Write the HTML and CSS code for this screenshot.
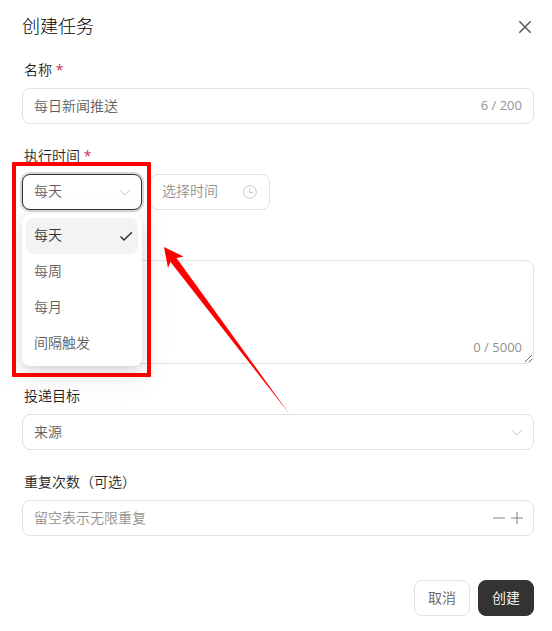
FILE: index.html
```
<!DOCTYPE html>
<html lang="zh-CN">
<head>
    <meta charset="UTF-8">
    <meta name="viewport" content="width=device-width, initial-scale=1">
    <title>创建任务</title>
    <link rel="stylesheet" href="styles.css">
</head>
<body>
    <form class="modal">
        <header class="modal-header">
            <h1 class="modal-title">创建任务</h1>
            <button type="button" class="close-button" aria-label="关闭">
                <svg width="18" height="18" viewBox="0 0 18 18"><path d="M3.3 3.3 14.7 14.7M14.7 3.3 3.3 14.7"/></svg>
            </button>
        </header>

        <div class="form-item">
            <label class="form-label" for="name">名称 <span class="required">*</span></label>
            <div class="field">
                <input type="text" id="name" class="field-input" value="每日新闻推送" maxlength="200">
                <span class="count">6 / 200</span>
            </div>
        </div>

        <div class="form-item">
            <label class="form-label" for="schedule">执行时间 <span class="required">*</span></label>
            <div class="schedule-row">
                <div class="schedule">
                    <div class="field field-active">
                        <select id="schedule" class="field-input">
                            <option>每天</option>
                            <option>每周</option>
                            <option>每月</option>
                            <option>间隔触发</option>
                        </select>
                        <svg class="chevron" width="14" height="14" viewBox="0 0 14 14"><path d="M2 5 7 10 12 5"/></svg>
                    </div>
                    <div class="menu" role="listbox" aria-label="执行时间">
                        <button type="button" class="menu-item menu-item-selected" role="option" aria-selected="true">
                            每天
                            <svg width="14" height="14" viewBox="0 0 14 14"><path d="M1.5 7.5 5 11 12.8 3.2"/></svg>
                        </button>
                        <button type="button" class="menu-item" role="option" aria-selected="false">每周</button>
                        <button type="button" class="menu-item" role="option" aria-selected="false">每月</button>
                        <button type="button" class="menu-item" role="option" aria-selected="false">间隔触发</button>
                    </div>
                    <div class="highlight"></div>
                    <svg class="arrow" width="128" height="170" viewBox="0 0 128 170"><path d="M1 1 20.5 10.5 13.5 12 126.5 168 7.5 16 5 22Z"/></svg>
                </div>
                <div class="field time-field">
                    <input type="text" class="field-input" placeholder="选择时间" aria-label="选择时间">
                    <svg class="clock" width="16" height="16" viewBox="0 0 16 16"><circle cx="8" cy="8" r="6.3"/><path d="M7.5 4.5V8.5H11"/></svg>
                </div>
            </div>
        </div>

        <div class="form-item form-item-prompt">
            <div class="textarea-wrap">
                <textarea class="textarea" aria-label="提示词" maxlength="5000"></textarea>
                <span class="count textarea-count">0 / 5000</span>
            </div>
        </div>

        <div class="form-item">
            <label class="form-label" for="target">投递目标</label>
            <div class="field">
                <select id="target" class="field-input">
                    <option>来源</option>
                </select>
                <svg class="chevron" width="14" height="14" viewBox="0 0 14 14"><path d="M2 5 7 10 12 5"/></svg>
            </div>
        </div>

        <div class="form-item">
            <label class="form-label" for="repeat">重复次数（可选）</label>
            <div class="field">
                <input type="text" inputmode="numeric" id="repeat" class="field-input" placeholder="留空表示无限重复">
                <div class="stepper">
                    <button type="button" class="step-button" aria-label="减少"><svg width="18" height="18" viewBox="0 0 18 18"><path d="M3 9H15"/></svg></button>
                    <button type="button" class="step-button" aria-label="增加"><svg width="18" height="18" viewBox="0 0 18 18"><path d="M3 9H15M9 3V15"/></svg></button>
                </div>
            </div>
        </div>

        <footer class="modal-footer">
            <button type="button" class="button">取消</button>
            <button type="submit" class="button button-primary">创建</button>
        </footer>
    </form>
</body>
</html>
```
FILE: styles.css
```
* {
    box-sizing: border-box;
}

body {
    margin: 0;
    background-color: #fff;
    color: #1f1f1f;
    font-family: "Open Sans", "Noto Sans CJK SC", sans-serif;
    font-size: 14px;
    font-weight: 350;
}

input,
select,
textarea,
button {
    font: inherit;
    color: inherit;
}

button {
    padding: 0;
    border: none;
    background: none;
    cursor: pointer;
}

svg {
    display: block;
    flex: none;
    fill: none;
    stroke: currentColor;
}

.modal {
    padding: 12px 18px 15px 22px;
}

.modal-header {
    display: flex;
    align-items: center;
    justify-content: space-between;
    height: 30px;
    margin-bottom: 20px;
}

.modal-title {
    margin: 0;
    padding-bottom: 2px;
    color: #000;
    font-size: 18px;
    font-weight: 300;
    line-height: 28px;
}

.close-button {
    color: #555;
    stroke-width: 1.5;
}

.form-item {
    margin-bottom: 24px;
}

.form-item-prompt {
    padding-top: 26px;
}

.form-label {
    display: block;
    height: 26px;
    padding-left: 2px;
    line-height: 16px;
}

.required {
    color: #d03050;
    font-weight: 400;
}

.field {
    position: relative;
    display: flex;
    align-items: center;
    height: 36px;
    padding: 0 11px;
    border: 1px solid #e0e0e0;
    border-radius: 8px;
    background-color: #fff;
    color: #606060;
}

.field-active {
    border-color: #333;
    box-shadow: 0 0 0 2px rgba(51, 51, 51, 0.2);
}

.field-input {
    flex: 1;
    min-width: 0;
    height: 34px;
    padding: 0 0 2px;
    border: none;
    outline: none;
    background: none;
    appearance: none;
}

.field-input::placeholder {
    color: #929292;
    opacity: 1;
}

.count {
    color: #929292;
    font-size: 13px;
    font-weight: 400;
    line-height: 18px;
}

.field .count {
    padding-bottom: 2px;
}

.chevron {
    position: absolute;
    right: 9px;
    color: #c8c8c8;
    pointer-events: none;
}

.schedule-row {
    display: flex;
    gap: 8px;
}

.schedule {
    position: relative;
    width: 120px;
}

.time-field {
    width: 120px;
}

.schedule-row .field-input {
    padding-bottom: 4px;
}

.clock {
    color: #c8c8c8;
}

.menu {
    position: absolute;
    z-index: 1;
    top: 40px;
    left: 0;
    width: 100%;
    padding: 4px;
    border-radius: 8px;
    background-color: #fff;
    box-shadow: 0 3px 6px -4px rgba(0, 0, 0, 0.12), 0 6px 16px rgba(0, 0, 0, 0.08), 0 9px 28px 8px rgba(0, 0, 0, 0.05);
}

.menu-item {
    display: flex;
    align-items: center;
    justify-content: space-between;
    width: 100%;
    height: 36px;
    padding: 0 5px 4px 8px;
    border-radius: 8px;
    color: #606060;
}

.menu-item svg {
    margin-top: 4px;
}

.menu-item-selected {
    background-color: #f3f3f3;
    color: #333;
    stroke-width: 1.5;
}

.highlight {
    position: absolute;
    z-index: 2;
    top: -12px;
    left: -10px;
    width: 139px;
    height: 215px;
    border: 4px solid #f00;
    border-radius: 1px;
    pointer-events: none;
}

.arrow {
    position: absolute;
    z-index: 2;
    top: 72px;
    left: 141px;
    fill: #f00;
    stroke: none;
    pointer-events: none;
}

.textarea-wrap {
    position: relative;
}

.textarea {
    display: block;
    width: 100%;
    height: 104px;
    padding: 8px 11px;
    border: 1px solid #e0e0e0;
    border-radius: 8px;
    outline: none;
    color: #606060;
    resize: vertical;
}

.textarea-count {
    position: absolute;
    right: 12px;
    bottom: 8px;
}

.stepper {
    display: flex;
    margin-right: -4px;
    color: #808080;
}

.modal-footer {
    display: flex;
    justify-content: flex-end;
    gap: 8px;
    margin-top: 44px;
}

.button {
    width: 56px;
    height: 36px;
    padding-bottom: 2px;
    border: 1px solid #e0e0e0;
    border-radius: 8px;
    color: #606060;
}

.button-primary {
    border-color: #333;
    background-color: #333;
    color: #fff;
}
```
